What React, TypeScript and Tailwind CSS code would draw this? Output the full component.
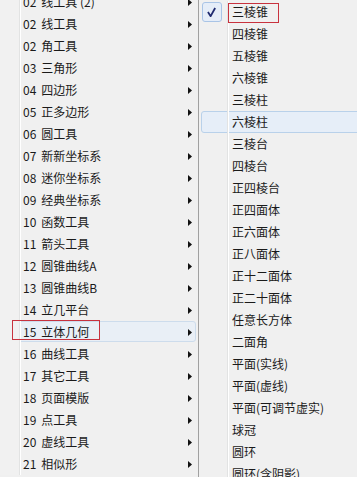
import React from "react";

const left: [string, string][] = [
  ["02", "线工具 (2)"],
  ["02", "线工具"],
  ["02", "角工具"],
  ["03", "三角形"],
  ["04", "四边形"],
  ["05", "正多边形"],
  ["06", "圆工具"],
  ["07", "新新坐标系"],
  ["08", "迷你坐标系"],
  ["09", "经典坐标系"],
  ["10", "函数工具"],
  ["11", "箭头工具"],
  ["12", "圆锥曲线A"],
  ["13", "圆锥曲线B"],
  ["14", "立几平台"],
  ["15", "立体几何"],
  ["16", "曲线工具"],
  ["17", "其它工具"],
  ["18", "页面模版"],
  ["19", "点工具"],
  ["20", "虚线工具"],
  ["21", "相似形"],
];

const right = [
  "三棱锥",
  "四棱锥",
  "五棱锥",
  "六棱锥",
  "三棱柱",
  "六棱柱",
  "三棱台",
  "四棱台",
  "正四棱台",
  "正四面体",
  "正六面体",
  "正八面体",
  "正十二面体",
  "正二十面体",
  "任意长方体",
  "二面角",
  "平面(实线)",
  "平面(虚线)",
  "平面(可调节虚实)",
  "球冠",
  "圆环",
  "圆环(含阴影)",
];

function Arrow() {
  return (
    <svg width="4" height="7" viewBox="0 0 4 7" className="block">
      <polygon points="0,0 4,3.5 0,7" fill="#111" />
    </svg>
  );
}

export default function App() {
  return (
    <div className="w-[357px] h-[477px] overflow-hidden flex bg-[#f0f0f0] text-[12px] leading-none text-[#1a1a1a] font-['Noto_Sans_CJK_SC','Noto_Sans',sans-serif]">
      {/* left menu */}
      <div className="w-[198px] shrink-0 mt-[-9px] flex flex-col">
        {left.map(([n, t], i) => (
          <div key={i} className="relative h-[22px] shrink-0 flex items-center">
            {i === 15 && (
              <div className="absolute left-[1px] right-[2px] top-0 bottom-[1px] rounded-[3px] border border-[#cddcec] bg-[#e9eff6]" />
            )}
            <div className="relative w-[20px] h-full border-r border-[#e2e3e3] shadow-[1px_0_0_#ffffff] bg-[#f1f1f1]" />
            <div className="relative pl-[3px] flex items-center">
              <span>{n}</span>
              <span className="ml-[5px]">{t}</span>
            </div>
            <div className="relative ml-auto pr-[6px]">
              <Arrow />
            </div>
            {i === 15 && (
              <div className="absolute left-[12px] top-[-1px] w-[88px] h-[20px] border border-[#c8323e]" />
            )}
          </div>
        ))}
      </div>

      {/* right submenu */}
      <div className="flex-1 border-l border-[#a0a0a0] pt-[1px] flex flex-col">
        {right.map((t, i) => (
          <div key={i} className="relative h-[22px] shrink-0 flex items-center">
            {i === 5 && (
              <div className="absolute left-[2px] right-[-4px] top-0 bottom-0 rounded-[3px] border border-[#b9d1ea] bg-[#e6eef8]" />
            )}
            <div className="relative w-[29px] h-full border-r border-[#e2e3e3] shadow-[1px_0_0_#ffffff] flex items-center pl-[3px]">
              {i === 0 && (
                <div className="w-[20px] h-[20px] rounded-[3px] border border-[#a9c4e6] bg-[#e5edf8] flex">
                  <svg width="20" height="20" viewBox="0 0 20 20" className="block">
                    <polyline
                      points="5.5,9 8.5,13.5 13.5,4.5"
                      fill="none"
                      stroke="#1f2a70"
                      strokeWidth="2"
                      strokeLinejoin="round"
                    />
                  </svg>
                </div>
              )}
            </div>
            <span className="relative pl-[4px]">{t}</span>
            {i === 0 && (
              <div className="absolute left-[29px] top-[2px] w-[51px] h-[20px] border border-[#c8323e]" />
            )}
          </div>
        ))}
      </div>
    </div>
  );
}
